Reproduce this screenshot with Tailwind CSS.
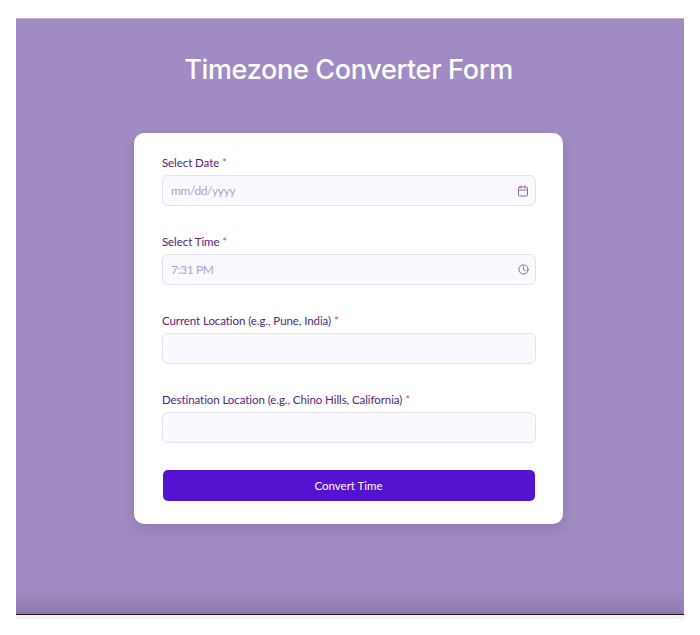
<!DOCTYPE html>
<html>
<head>
<meta charset="utf-8">
<script src="https://cdn.jsdelivr.net/npm/@tailwindcss/browser@4"></script>
</head>
<body class="bg-white font-['Lato',sans-serif]">
<div class="w-[700px] h-[635px] pt-[18px] px-4 overflow-hidden">
  <main class="h-[597px] pr-[3px] border-b-[1.5px] border-b-[#1c1826] flex flex-col items-center bg-[linear-gradient(to_bottom,#e0dbe8_0,#a08bc2_1px,#a08bc2_96%,#8d7aab_100%)]">
    <h1 class="mt-[34px] h-[36px] font-['Inter',sans-serif] text-[27px] leading-[36px] font-medium text-white tracking-[-0.33px]">Timezone Converter Form</h1>
    <form class="mt-[44.5px] w-[429px] h-[391px] bg-white rounded-[10px] shadow-[0_5px_12px_rgba(50,30,90,0.16)] pl-7 pr-[27px] pt-[22.5px] flex flex-col">
      <label class="h-[20px] text-[11.5px] leading-[16px] tracking-[-0.08px] text-[#54247a]">Select Date <span class="text-[#d9534f]">*</span></label>
      <div class="h-[31px] bg-[#faf9fd] border border-[#e6dfee] rounded-[6px] flex items-center justify-between pl-2 pr-[6px] text-[12px] tracking-[-0.4px] text-[#b3a0c4]">
        <span>mm/dd/yyyy</span>
        <svg class="w-[12px] h-[12px] text-[#8d6aa5]" viewBox="0 0 24 24" fill="none" stroke="currentColor" stroke-width="2" stroke-linecap="round" stroke-linejoin="round"><path d="M8 2v4"/><path d="M16 2v4"/><rect x="3" y="4" width="18" height="18" rx="2"/><path d="M3 10h18"/></svg>
      </div>
      <label class="mt-[28px] h-[20px] text-[11.5px] leading-[16px] tracking-[-0.08px] text-[#54247a]">Select Time <span class="text-[#d9534f]">*</span></label>
      <div class="h-[31px] bg-[#faf9fd] border border-[#e6dfee] rounded-[6px] flex items-center justify-between pl-2 pr-[6.5px] text-[12px] tracking-[-0.4px] text-[#b3a0c4]">
        <span>7:31 PM</span>
        <svg class="w-[11px] h-[11px] text-[#8058a0]" viewBox="0 0 24 24" fill="none" stroke="currentColor" stroke-width="2" stroke-linecap="round" stroke-linejoin="round"><circle cx="12" cy="12" r="10"/><path d="M12 6v6l4 2"/></svg>
      </div>
      <label class="mt-[28px] h-[20px] text-[11.5px] leading-[16px] tracking-[-0.08px] text-[#54247a]">Current Location (e.g., Pune, India) <span class="text-[#d9534f]">*</span></label>
      <input type="text" class="h-[31px] bg-[#faf9fd] border border-[#e6dfee] rounded-[6px]">
      <label class="mt-[28px] h-[20px] text-[11.5px] leading-[16px] tracking-[-0.08px] text-[#54247a]">Destination Location (e.g., Chino Hills, California) <span class="text-[#d9534f]">*</span></label>
      <input type="text" class="h-[31px] bg-[#faf9fd] border border-[#e6dfee] rounded-[6px]">
      <button type="button" class="mt-[27px] ml-[0.5px] mr-[1.5px] h-[31px] bg-[#5512d1] rounded-[5px] text-white text-[11.5px]">Convert Time</button>
    </form>
  </main>
  <div class="h-[4px] bg-[#f0f3ef]"></div>
</div>
</body>
</html>
